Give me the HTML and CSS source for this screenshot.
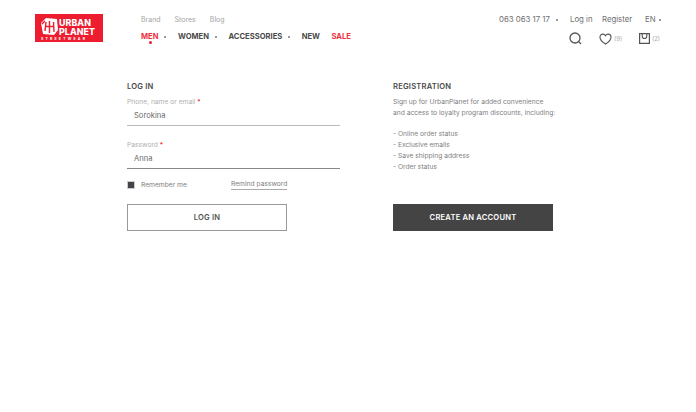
FILE: index.html
```html
<!DOCTYPE html>
<html lang="en">
  <head>
    <meta name="viewport" content="width=device-width, initial-scale=1.0" />
    <title>Log in</title>
    <link rel="stylesheet" href="styles.css">
  </head>
  <body>
    <header class="header">
      <a class="logo" href="#">
        <svg class="logo-mark" viewBox="0 0 17 17" width="17" height="17">
          <path d="M0 5 L5 0 L16 1 L17 12 L13 17 L2 16 Z" fill="#fff"/>
          <path d="M5 4 L4 13 M8.5 3 V15 M12.5 4 L13 14 M4 8.5 H13 M1 6 L4 3" stroke="#ed1c2e" stroke-width="1.4" fill="none"/>
        </svg>
        <span class="logo-text">URBAN<br>PLANET</span>
        <span class="logo-sub">STREETWEAR</span>
      </a>
      <div class="nav-col">
        <nav class="subnav">
          <a href="#">Brand</a>
          <a href="#">Stores</a>
          <a href="#">Blog</a>
        </nav>
        <nav class="mainnav">
          <a class="red current dot" href="#">MEN</a>
          <a class="dot" href="#">WOMEN</a>
          <a class="dot" href="#">ACCESSORIES</a>
          <a href="#">NEW</a>
          <a class="red" href="#">SALE</a>
        </nav>
      </div>
      <div class="right-col">
        <div class="toplinks">
          <a class="phone dot" href="#">063 063 17 17</a>
          <a class="login" href="#">Log in</a>
          <a class="register" href="#">Register</a>
          <a class="lang dot" href="#">EN</a>
        </div>
        <div class="icons">
          <a class="icon-search" href="#">
            <svg viewBox="0 0 13 13" width="13" height="13"><circle cx="6" cy="6" r="5" fill="none" stroke="#555" stroke-width="1.3"/><path d="M9.5 9.5 L12 12" stroke="#555" stroke-width="1.3"/></svg>
          </a>
          <a class="icon-fav" href="#">
            <svg viewBox="0 0 14 13" width="13" height="12"><path d="M7 12 C3 9.5 1 7.5 1 4.6 C1 2.6 2.5 1.2 4.2 1.2 C5.4 1.2 6.4 1.8 7 2.9 C7.6 1.8 8.6 1.2 9.8 1.2 C11.5 1.2 13 2.6 13 4.6 C13 7.5 11 9.5 7 12 Z" fill="none" stroke="#555" stroke-width="1.2"/></svg>
            <span>(9)</span>
          </a>
          <a class="icon-bag" href="#">
            <svg viewBox="0 0 11 11" width="11" height="11"><path d="M.6 .6 H10.4 V10.4 H.6 Z" fill="none" stroke="#555" stroke-width="1.2"/><path d="M3.2 .6 V3 C3.2 6.4 7.8 6.4 7.8 3 V.6" fill="none" stroke="#555" stroke-width="1.1"/></svg>
            <span>(2)</span>
          </a>
        </div>
      </div>
    </header>

    <main class="content">
      <section class="login-box">
        <h2>LOG IN</h2>
        <div class="field first">
          <label>Phone, name or email <i>*</i></label>
          <div class="value">Sorokina</div>
        </div>
        <div class="field">
          <label>Password <i>*</i></label>
          <div class="value dark-line">Anna</div>
        </div>
        <div class="login-row">
          <span class="check"></span>
          <span class="remember">Remember me</span>
          <a class="remind" href="#">Remind password</a>
        </div>
        <a class="btn btn-light" href="#">LOG IN</a>
      </section>
      <section class="reg-box">
        <h2>REGISTRATION</h2>
        <p class="intro">Sign up for UrbanPlanet for added convenience<br>and access to loyalty program discounts, including:</p>
        <ul class="perks">
          <li>- Online order status</li>
          <li>- Exclusive emails</li>
          <li>- Save shipping address</li>
          <li>- Order status</li>
        </ul>
        <a class="btn btn-dark" href="#">CREATE AN ACCOUNT</a>
      </section>
    </main>
  </body>
</html>
```

FILE: styles.css
```css
* {
  padding: 0;
  margin: 0;
  box-sizing: border-box;
  font-family: "Inter", "Liberation Sans", sans-serif;
}
body {
  background-color: #fff;
  color: #4a4a4a;
  width: 696px;
  height: 412px;
  overflow: hidden;
}
a {
  color: inherit;
  text-decoration: none;
}
.header {
  display: flex;
  padding: 14px 0 0 35px;
  height: 82px;
}
.logo {
  width: 68px;
  height: 28px;
  background-color: #ed1c2e;
  color: #fff;
  display: grid;
  grid-template-columns: 17px 1fr;
  grid-template-rows: 19px 6px;
  align-items: center;
  padding: 3px 4px 0 6px;
}
.logo-text {
  font-weight: 800;
  font-size: 8.8px;
  line-height: 9px;
  letter-spacing: 0.1px;
  padding-left: 1px;
}
.logo-sub {
  grid-column: 1 / 3;
  font-size: 3.5px;
  line-height: 4px;
  font-weight: 700;
  letter-spacing: 2.2px;
  white-space: nowrap;
}
.nav-col {
  margin-left: 38px;
  width: 358px;
  flex-shrink: 0;
}
.subnav {
  display: flex;
  gap: 14px;
  font-size: 7px;
  line-height: 10px;
  color: #a4a4a4;
  padding-top: 1px;
}
.mainnav {
  display: flex;
  margin-top: 7px;
  font-size: 7.6px;
  line-height: 10px;
  font-weight: 700;
  gap: 11.5px;
}
.red {
  color: #f0303f;
}
.dot::after {
  content: "";
  display: inline-block;
  width: 2px;
  height: 2px;
  border-radius: 50%;
  background-color: #777;
  margin-left: 6px;
  vertical-align: middle;
}
.current {
  position: relative;
}
.current::before {
  content: "";
  position: absolute;
  left: 8px;
  bottom: -2px;
  width: 3px;
  height: 3px;
  border-radius: 50%;
  background-color: #ed1c2e;
}
.right-col {
  width: 197px;
  flex-shrink: 0;
}
.toplinks {
  display: flex;
  font-size: 7.8px;
  line-height: 10px;
  color: #707070;
}
.phone {
  width: 71px;
}
.login {
  width: 32px;
}
.register {
  width: 43px;
}
.lang {
  white-space: nowrap;
}
.lang::after {
  margin-left: 3px;
}
.icons {
  display: flex;
  margin-top: 8px;
  padding-left: 70px;
  align-items: center;
  font-size: 6px;
  color: #aaa;
}
.icons a {
  display: flex;
  align-items: center;
  gap: 2px;
}
.icon-search {
  width: 30px;
}
.icon-fav {
  width: 40px;
}
.icon-bag {
  gap: 3px;
}
.content {
  display: flex;
  padding-left: 127px;
}
h2 {
  font-size: 7.6px;
  line-height: 10px;
  font-weight: 600;
  letter-spacing: 0.2px;
}
.login-box {
  width: 266px;
}
.field {
  width: 213px;
  margin-top: 14px;
}
.field.first {
  margin-top: 5px;
}
.field label {
  display: block;
  font-size: 6.7px;
  line-height: 10px;
  color: #b0b0b0;
}
.field i {
  color: #ed1c2e;
  font-style: normal;
}
.value {
  font-size: 7.6px;
  line-height: 12px;
  padding: 3px 0 3px 7px;
  color: #6a6a6a;
  border-bottom: 1px solid #bbb;
}
.value.dark-line {
  border-bottom-color: #888;
}
.login-row {
  display: flex;
  align-items: center;
  margin-top: 10px;
  font-size: 6.7px;
  line-height: 10px;
  color: #808080;
}
.check {
  width: 8px;
  height: 8px;
  background-color: #444;
  background-clip: padding-box;
  border: 1px solid #ccc;
}
.remember {
  margin-left: 6px;
  width: 90px;
}
.remind {
  border-bottom: 1px solid #aaa;
}
.btn {
  display: flex;
  align-items: center;
  justify-content: center;
  width: 160px;
  height: 27px;
  font-size: 7.6px;
  font-weight: 600;
  letter-spacing: 0.2px;
}
.btn-light {
  margin-top: 14px;
  border: 1px solid #999;
  color: #555;
}
.btn-dark {
  margin-top: 31px;
  background-color: #444;
  color: #fff;
}
.reg-box {
  width: 176px;
}
.intro {
  margin-top: 5px;
  font-size: 6.7px;
  line-height: 11px;
  color: #808080;
  white-space: nowrap;
}
.perks {
  list-style: none;
  margin-top: 10px;
  font-size: 6.7px;
  line-height: 11px;
  color: #808080;
}
```
